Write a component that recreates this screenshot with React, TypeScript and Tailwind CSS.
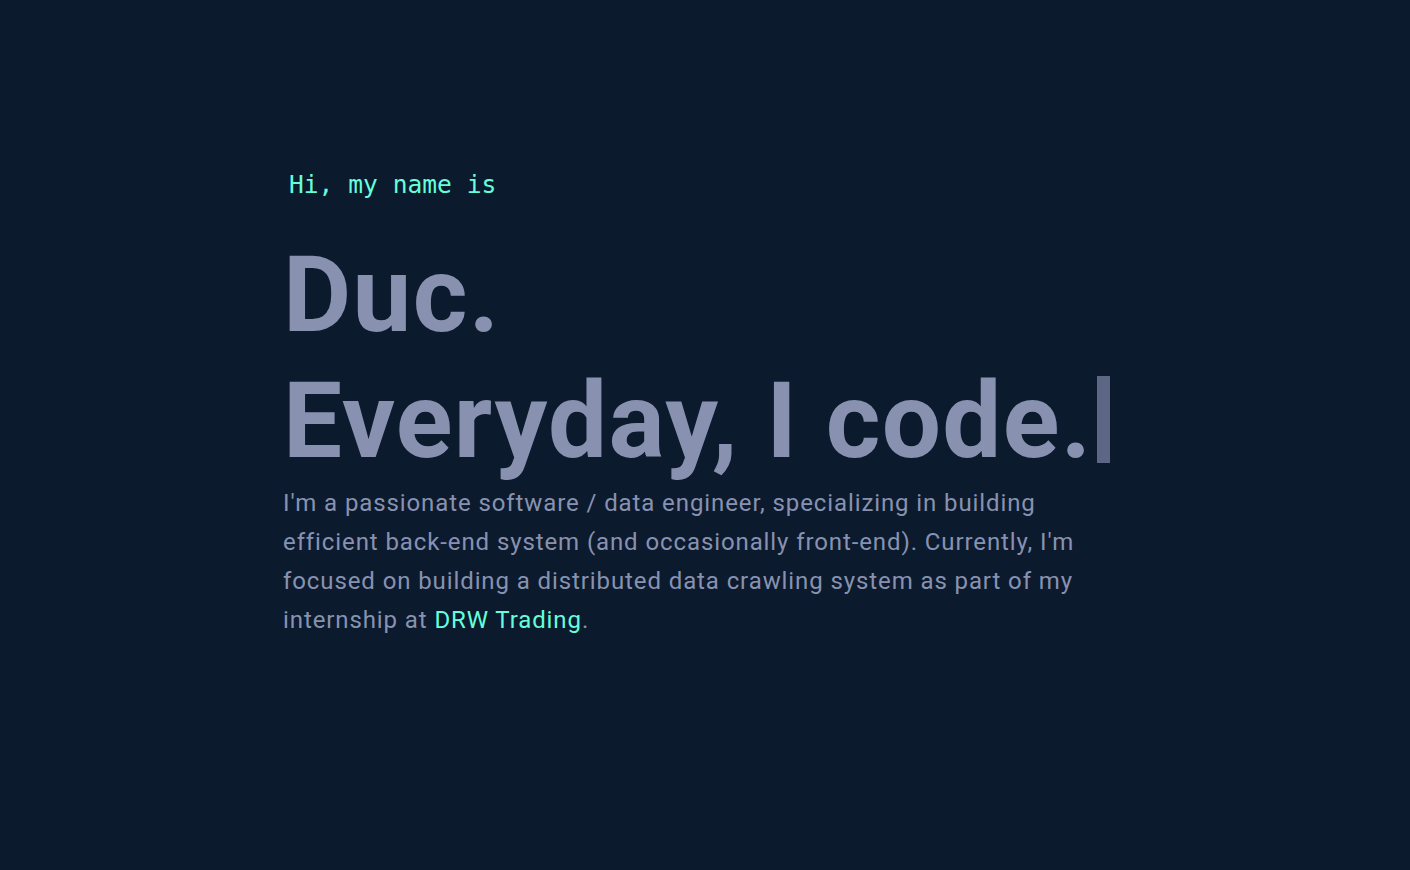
export default function App() {
  return (
    <main className="min-h-screen w-full bg-[#0c1a2e]">
      <section className="mx-auto max-w-[844px] pt-[167px]">
        <p className="font-['DejaVu_Sans_Mono',monospace] text-[24.6px] leading-[36px] text-[#64ffda] pl-[6px]">
          Hi, my name is
        </p>
        <h1 className="mt-[30px] font-['Roboto',sans-serif] font-bold text-[105px] leading-[126px] tracking-[1.3px] text-[#8892b0]">
          Duc.
        </h1>
        <h2 className="font-['Roboto',sans-serif] font-bold text-[105px] leading-[126px] tracking-[1.3px] text-[#8892b0] flex items-end">
          <span>Everyday, I code.</span>
          <span className="ml-[5px] mb-[22px] inline-block h-[87px] w-[13px] bg-[#5d6785]"></span>
        </h2>
        <p className="-mt-[1px] max-w-[812px] font-['Roboto',sans-serif] text-[24px] leading-[39px] tracking-[0.9px] text-[#8892b0]">
          I'm a passionate software / data engineer, specializing in building efficient back-end
          system (and occasionally front-end). Currently, I'm focused on building a distributed
          data crawling system as part of my internship at{' '}
          <a href="#" className="text-[#64ffda]">
            DRW Trading
          </a>
          .
        </p>
      </section>
    </main>
  );
}
